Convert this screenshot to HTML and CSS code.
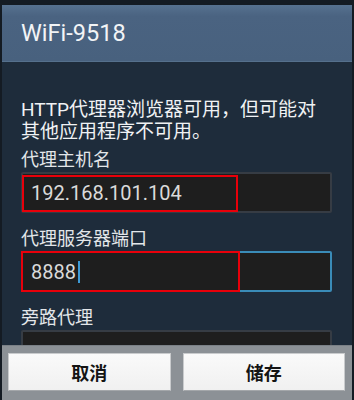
FILE: index.html
```html
<!DOCTYPE html>
<html lang="zh-CN">
<head>
<meta charset="utf-8">
<title>WiFi-9518</title>
<link rel="stylesheet" href="styles.css">
</head>
<body>
<div class="screen">
  <div class="dialog">
    <div class="title">WiFi-9518</div>
    <div class="content">
      <p class="desc">HTTP代理器浏览器可用，但可能对<br>其他应用程序不可用。</p>
      <div class="label">代理主机名</div>
      <div class="field">
        <span class="value">192.168.101.104</span>
        <span class="mark mark-host"></span>
      </div>
      <div class="label">代理服务器端口</div>
      <div class="field focused">
        <span class="value">8888</span><span class="cursor"></span>
        <span class="mark mark-port"></span>
      </div>
      <div class="label">旁路代理</div>
      <div class="field"></div>
    </div>
    <div class="buttons">
      <div class="btn">取消</div>
      <div class="btn">储存</div>
    </div>
  </div>
</div>
</body>
</html>
```

FILE: styles.css
```css
html, body {
  margin: 0;
  padding: 0;
}
body {
  width: 354px;
  height: 400px;
  overflow: hidden;
  background: #121820;
  font-family: Roboto, "Noto Sans CJK SC", sans-serif;
}
.screen {
  height: 400px;
  box-sizing: border-box;
  padding: 5px 2px 0 2px;
  display: flex;
  flex-direction: column;
  background: #141b23;
}
.dialog {
  flex: 1;
  display: flex;
  flex-direction: column;
  overflow: hidden;
}
.title {
  height: 57px;
  flex: none;
  box-sizing: border-box;
  padding-left: 19px;
  display: flex;
  align-items: center;
  background: linear-gradient(#56718f, #4a6381 20%, #48617e);
  border-bottom: 1px solid #55708c;
  color: #f2f4f6;
  font-size: 23.5px;
}
.content {
  height: 283px;
  flex: none;
  box-sizing: border-box;
  padding: 37px 20px 0 19px;
  background: #1e2c3b;
  overflow: hidden;
}
.desc {
  margin: 0;
  font-size: 19px;
  line-height: 22px;
  color: #f0f2f4;
}
.label {
  margin-top: 15px;
  font-size: 18px;
  line-height: 22px;
  color: #e3e6e9;
}
.desc + .label {
  margin-top: 6px;
}
.field {
  position: relative;
  height: 41px;
  margin-top: 1px;
  box-sizing: border-box;
  border: 2px solid #363c44;
  border-radius: 2px;
  background: #1e1e1e;
  display: flex;
  align-items: center;
  padding-left: 8px;
  color: #dadada;
  font-size: 20px;
}
.field.focused {
  border-color: #3a8cb8;
}
.cursor {
  width: 2px;
  height: 22px;
  margin-left: 2px;
  background: #3d9ad6;
}
.mark {
  position: absolute;
  border: 2px solid #e8000a;
  box-sizing: border-box;
}
.mark-host {
  left: -1px;
  top: 1px;
  width: 216px;
  height: 37px;
}
.mark-port {
  left: -2px;
  top: -2px;
  width: 219px;
  height: 41px;
}
.buttons {
  flex: 1;
  display: flex;
  gap: 12px;
  padding: 7px 7px 9px 6px;
  background: #8c9196;
  border-top: 1px solid #7a8086;
  box-sizing: border-box;
}
.btn {
  flex: 1;
  display: flex;
  align-items: center;
  justify-content: center;
  background: linear-gradient(#fafafa, #f0f0f0);
  border: 1px solid #c9cbcd;
  border-bottom-color: #a4a7aa;
  box-sizing: border-box;
  color: #141414;
  font-size: 18px;
  font-weight: bold;
}
```
